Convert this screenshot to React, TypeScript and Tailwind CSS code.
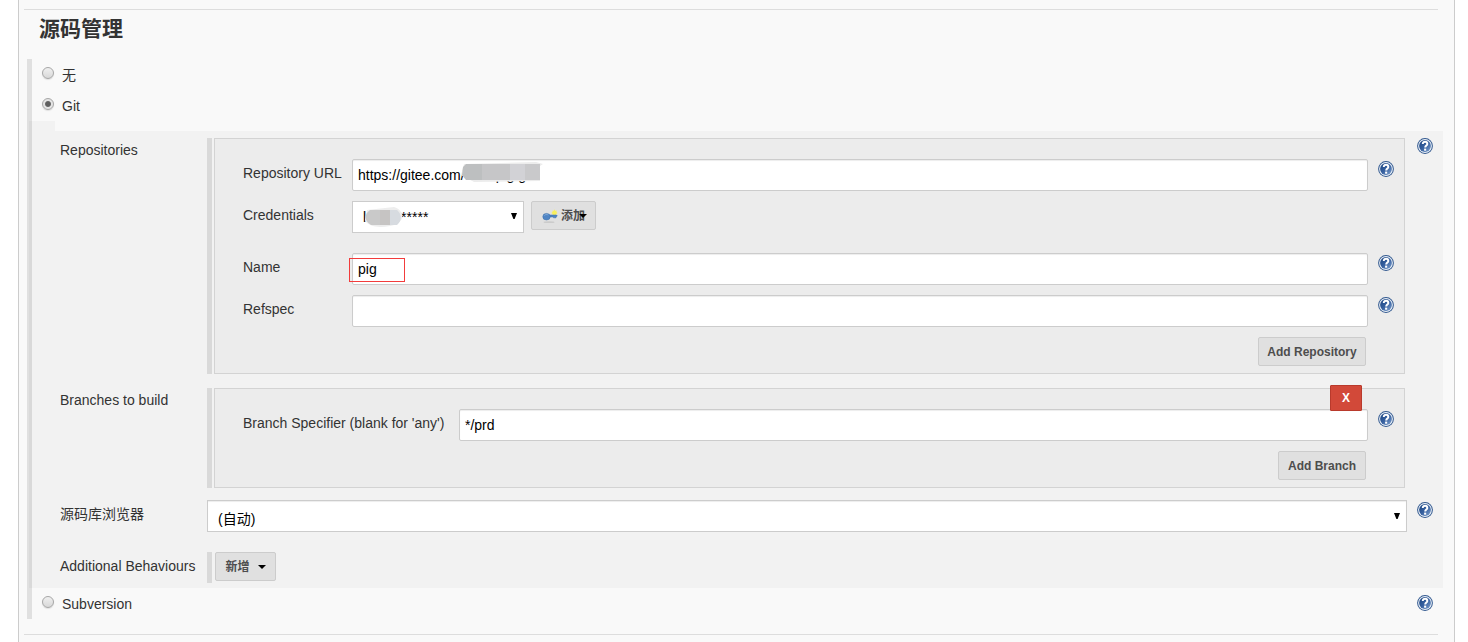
import { useState, type ReactNode } from 'react';
import { clsx } from 'clsx';

const BLANKS = '\u00a0'.repeat(7);

function HelpLink({ topic, className }: { topic: string; className?: string }) {
  return (
    <a href="#help" aria-label={`Help: ${topic}`} className={clsx('block h-4 w-4 shrink-0', className)}>
      <svg viewBox="0 0 16 16" className="h-4 w-4">
        <defs>
          <linearGradient id="help-fill" x1="0" y1="0" x2="1" y2="1">
            <stop offset="0" stopColor="#1d4580" />
            <stop offset="0.5" stopColor="#36609f" />
            <stop offset="1" stopColor="#82a3d0" />
          </linearGradient>
        </defs>
        <circle cx="8" cy="8" r="7.9" fill="#31588f" />
        <circle cx="8" cy="8" r="6.9" fill="#edf2f8" />
        <circle cx="8" cy="8" r="5.9" fill="url(#help-fill)" />
        <path
          d="M5.8 6C5.8 4.4 6.8 3.8 8.1 3.8s2.2.8 2.2 2.1c0 1.7-2.1 1.7-2.1 3.7"
          fill="none"
          stroke="#fff"
          strokeWidth="2"
        />
        <rect x="7.1" y="10.6" width="2.1" height="2.1" fill="#fff" />
      </svg>
    </a>
  );
}

function Radio({
  id,
  label,
  checked,
  onChange,
}: {
  id: string;
  label: string;
  checked: boolean;
  onChange: (id: string) => void;
}) {
  return (
    <div className="flex items-start pl-[10px]">
      <input
        type="radio"
        id={id}
        name="scm"
        checked={checked}
        onChange={() => onChange(id)}
        className="mt-2 h-3 w-3 appearance-none rounded-full border border-[#a6a6a6] bg-linear-to-b from-[#f0f0f0] to-[#d8d8d8] shadow-[0_1px_1px_#e0e0e0] checked:bg-[radial-gradient(circle,#5f5f5f_2px,#6a6a6a_2.5px,#e4e4e4_3.5px)]"
      />
      <label htmlFor={id} className="mt-1.5 ml-2 leading-5">
        {label}
      </label>
    </div>
  );
}

function Button({ id, children, className }: { id?: string; children: ReactNode; className?: string }) {
  return (
    <button
      type="button"
      id={id}
      className={clsx(
        'flex h-[29px] items-center justify-center rounded-[2px] border border-[#ccc] bg-[#e0e0e0] text-xs font-bold whitespace-nowrap text-[#4d4d4d]',
        className
      )}
    >
      {children}
    </button>
  );
}

function TextInput({ id, value }: { id: string; value?: string }) {
  return (
    <input
      type="text"
      id={id}
      defaultValue={value}
      className="h-8 w-full rounded-[2px] border border-[#ccc] bg-white px-[5px] text-black shadow-[inset_0_1px_1px_rgba(0,0,0,0.075)] outline-none"
    />
  );
}

function Arrow({ className }: { className?: string }) {
  return (
    <svg viewBox="0 0 6 6" className={clsx('pointer-events-none h-1.5 w-1.5', className)}>
      <path d="M0 0h6L3.6 6H2.4z" fill="#000" />
    </svg>
  );
}

function Caret({ className }: { className?: string }) {
  return (
    <svg viewBox="0 0 8 4" className={clsx('h-1 w-2', className)}>
      <path d="M0 0h8L4 4z" fill="#000" />
    </svg>
  );
}

function Field({
  id,
  label,
  help,
  labelClass = 'w-[109px]',
  children,
}: {
  id: string;
  label: string;
  help?: boolean;
  labelClass?: string;
  children: ReactNode;
}) {
  return (
    <div className="flex items-start">
      <label htmlFor={id} className={clsx('mt-1 shrink-0 leading-5 whitespace-nowrap', labelClass)}>
        {label}
      </label>
      <div className="relative min-w-0 flex-1">{children}</div>
      {help ? <HelpLink topic={label} className="mt-0.5 ml-[10px]" /> : <div className="ml-[10px] w-4" />}
    </div>
  );
}

function Row({ label, htmlFor, children }: { label: string; htmlFor?: string; children: ReactNode }) {
  return (
    <div className="flex items-start">
      {htmlFor ? (
        <label htmlFor={htmlFor} className="mt-1 w-[147px] shrink-0 leading-5 whitespace-nowrap">
          {label}
        </label>
      ) : (
        <div className="mt-0.5 w-[147px] shrink-0 leading-5 whitespace-nowrap">{label}</div>
      )}
      {children}
    </div>
  );
}

function Chunk({ children }: { children: ReactNode }) {
  return (
    <div className="min-w-0 flex-1 border-l-[5px] border-[#d9d9d9] pl-0.5">
      <div className="relative border border-[#d3d3d3] bg-[#ececec] pt-5 pr-[10px] pb-[7px] pl-7">{children}</div>
    </div>
  );
}

function KeyIcon() {
  return (
    <svg viewBox="0 0 16 16" className="h-4 w-4">
      <ellipse cx="7" cy="14.2" rx="5.5" ry="0.9" fill="#cbcbcb" />
      <path
        d="M12.3 1.2l.8 1.5 1.7-.3-.4 1.6 1.2 1-1.4.9-.2 1.5-1.6-.6-1.5.7-.3-1.6L9.400 5l1.1-1 .1-1.500 1.200.3z"
        fill="#f8ef5c"
      />
      <path d="M7 7h7.600l.6.8-.7 1H14v1h-2.500v-.8H7z" fill="#4f84c2" stroke="#3a6eab" strokeWidth="0.5" />
      <ellipse cx="4.500" cy="8.700" rx="3.700" ry="3.300" fill="#5085c4" stroke="#3a6eab" strokeWidth="0.5" />
      <path d="M2 7.800c.8-1.400 3-1.700 4.300-.8" stroke="#86aedb" strokeWidth="0.8" fill="none" />
    </svg>
  );
}

export default function App() {
  const [scm, setScm] = useState('git');

  return (
    <div className="bg-white pr-[13px] pl-[18px] font-['Liberation_Sans','Noto_Sans_CJK_SC',sans-serif] text-sm text-[#333]">
      <form className="min-h-screen border-x border-[#ccc] bg-[#f9f9f9] pt-[9px]">
        <hr className="mr-4 ml-[5px] border-[#ddd]" />
        <h2 className="mt-1 ml-5 text-[21px] leading-[30px] font-bold">源码管理</h2>

        <div className="mt-[15px] mr-[11px] ml-2">
          <div className="border-l-[5px] border-[#e0e0e0]">
            <div className="h-[31px]">
              <Radio id="none" label="无" checked={scm === 'none'} onChange={setScm} />
            </div>
            <div className="h-[31px]">
              <Radio id="git" label="Git" checked={scm === 'git'} onChange={setScm} />
            </div>
          </div>

          <div className="border-l-2 border-[#e0e0e0]">
            <div className="border-l-[3px] border-[#d9d9d9]">
              <div className="h-[10px] w-[23px] bg-[#f2f2f2]" />
              <div className="bg-[#f2f2f2] pt-[7px] pr-[10px] pb-[5px] pl-7">
                <Row label="Repositories">
                  <Chunk>
                    <Field id="url" label="Repository URL" help>
                      <TextInput id="url" value={`https://gitee.com/${BLANKS}/pig.git`} />
                      <svg viewBox="0 0 84 22" className="absolute top-0.5 left-[108px] h-[22px] w-[84px]">
                        <path d="M4 3L76 1l7 2-3 2v15L14 21 1 14z" fill="#ececec" />
                        <path d="M6 3h16v16H6l-4-5 1-8z" fill="#bdbfc0" />
                        <path d="M22 3h28v16H22z" fill="#c6c6c8" />
                        <path d="M50 3h15v16H50z" fill="#d2d2d6" />
                        <path d="M65 3h15v16H65z" fill="#c9c9cb" />
                      </svg>
                    </Field>

                    <div className="mt-[10px]">
                      <Field id="credentials" label="Credentials">
                        <div className="flex items-start">
                          <div className="relative w-[172px]">
                            <select
                              id="credentials"
                              className="h-8 w-full appearance-none border border-[#ccc] bg-white pl-[10px] text-black outline-none"
                            >
                              <option>{`l${BLANKS}\u00a0\u00a0*****`}</option>
                            </select>
                            <Arrow className="absolute top-3 right-[7px]" />
                            <svg viewBox="0 0 40 22" className="absolute top-[5px] left-3 h-[22px] w-10">
                              <path d="M3 4L30 1c6 2 9 6 8 11-1 4-6 7-12 8-11 2-22 1-25-6z" fill="#ededed" />
                              <path d="M6 4h10v15H7C0 15 0 8 6 4z" fill="#c9c9c9" />
                              <path d="M16 4h10v15H16z" fill="#c6c4c3" />
                              <path d="M26 4h7c5 4 5 11 0 15h-7z" fill="#d7dbe0" />
                            </svg>
                          </div>
                          <Button className="relative ml-[7px] w-[65px]">
                            <KeyIcon />
                            <span className="ml-[3px]">添加</span>
                            <Caret className="absolute top-3 right-2" />
                          </Button>
                        </div>
                      </Field>
                    </div>

                    <div className="mt-5">
                      <Field id="name" label="Name" help>
                        <TextInput id="name" value="pig" />
                        <div className="pointer-events-none absolute top-[5px] -left-[3px] h-6 w-14 border border-[#f23c3c]" />
                      </Field>
                    </div>

                    <div className="mt-[10px]">
                      <Field id="refspec" label="Refspec" help>
                        <TextInput id="refspec" />
                      </Field>
                    </div>

                    <div className="mt-[10px] mr-7 flex justify-end">
                      <Button className="w-[108px]">Add Repository</Button>
                    </div>
                  </Chunk>
                  <HelpLink topic="Repositories" className="ml-3" />
                </Row>

                <div className="mt-[14px]">
                  <Row label="Branches to build">
                    <Chunk>
                      <Field id="branch" label="Branch Specifier (blank for 'any')" labelClass="w-[216px]" help>
                        <TextInput id="branch" value="*/prd" />
                      </Field>
                      <button
                        type="button"
                        aria-label="Delete branch"
                        className="absolute -top-1 right-[42px] h-[26px] w-8 rounded-[1px] border border-[#b93a2c] bg-[#d24939] text-xs font-bold text-white"
                      >
                        X
                      </button>
                      <div className="mt-[10px] mr-7 flex justify-end">
                        <Button className="w-[88px]">Add Branch</Button>
                      </div>
                    </Chunk>
                    <div className="ml-3 w-4" />
                  </Row>
                </div>

                <div className="mt-3">
                  <Row label="源码库浏览器" htmlFor="browser">
                    <div className="relative min-w-0 flex-1">
                      <select
                        id="browser"
                        className="h-8 w-full appearance-none border border-[#ccc] bg-white pt-1.5 pl-[10px] text-black shadow-[inset_0_1px_1px_rgba(0,0,0,0.075)] outline-none"
                      >
                        <option>(自动)</option>
                      </select>
                      <Arrow className="absolute top-[13px] right-[7px]" />
                    </div>
                    <HelpLink topic="源码库浏览器" className="mt-0.5 ml-[10px]" />
                  </Row>
                </div>

                <div className="mt-5">
                  <Row label="Additional Behaviours" htmlFor="add-behaviour">
                    <div className="h-[31px] border-l-[5px] border-[#d9d9d9] pl-[3px]">
                      <Button id="add-behaviour" className="w-[61px]">
                        新增
                        <Caret className="ml-2" />
                      </Button>
                    </div>
                  </Row>
                </div>
              </div>
            </div>
          </div>

          <div className="flex h-[31px] items-start justify-between border-l-[5px] border-[#e0e0e0] pr-[10px]">
            <Radio id="svn" label="Subversion" checked={scm === 'svn'} onChange={setScm} />
            <HelpLink topic="Subversion" className="mt-[7px]" />
          </div>
        </div>

        <hr className="mt-[15px] mr-4 ml-[5px] border-[#ddd]" />
      </form>
    </div>
  );
}
